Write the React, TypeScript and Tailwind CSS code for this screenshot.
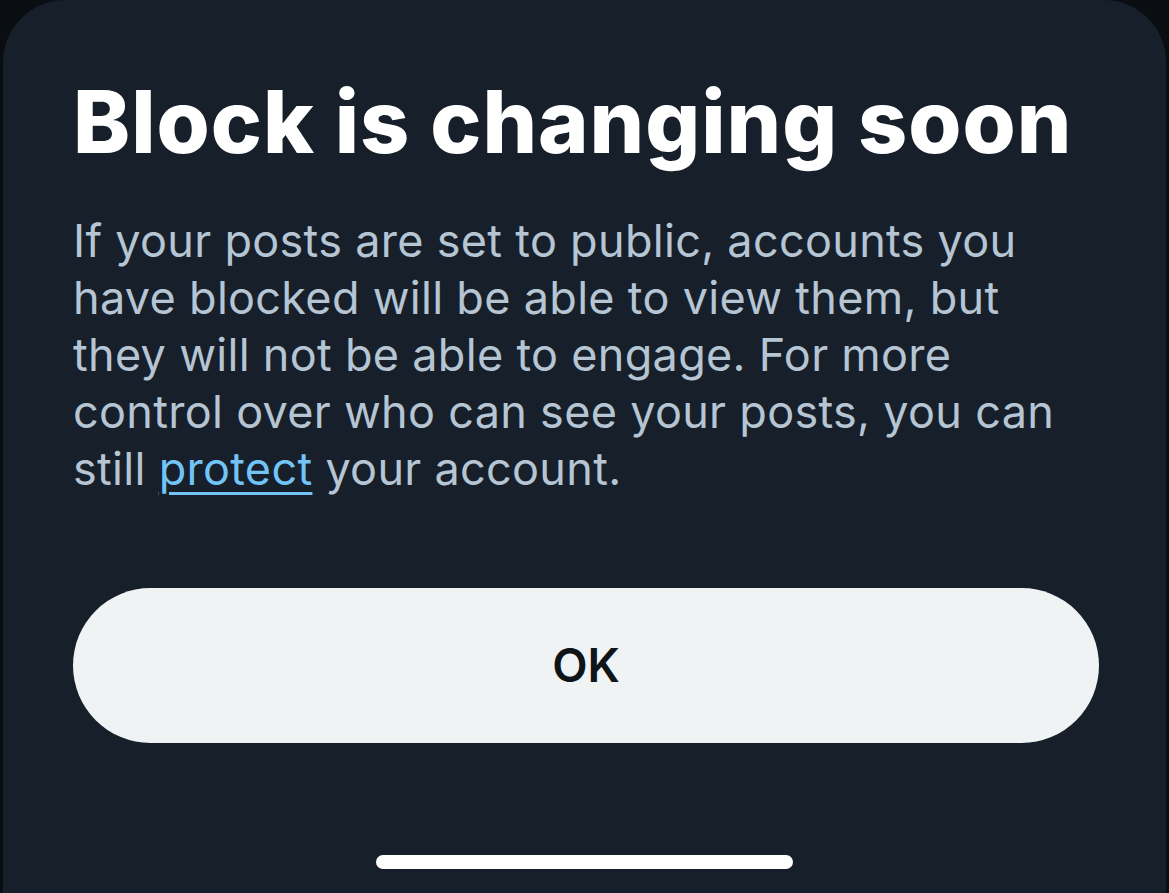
export default function App() {
  return (
    <div className="h-[893px] w-[1169px] overflow-hidden bg-[#0a0d11] font-['Inter',sans-serif]">
      <div className="mx-[3px] flex h-full flex-col rounded-t-[62px] bg-[#17202a] px-[70px]">
        <h1 className="mt-[76px] whitespace-nowrap text-[86px] font-extrabold leading-[92px] tracking-[1px] text-white">
          Block is changing soon
        </h1>
        <p className="mt-[44px] whitespace-nowrap text-[45px] leading-[57px] tracking-[0.3px] text-[#b6c5d3]">
          If your posts are set to public, accounts you
          <br />
          have blocked will be able to view them, but
          <br />
          they will not be able to engage. For more
          <br />
          control over who can see your posts, you can
          <br />
          still{" "}
          <a href="#" className="text-[#72c4f6] underline decoration-[3px] underline-offset-[7px]">
            protect
          </a>{" "}
          your account.
        </p>
        <button className="mt-[91px] h-[155px] w-[1026px] rounded-full bg-[#eff3f4] text-[46px] font-semibold text-[#0f1419]">
          OK
        </button>
        <div className="mt-[112px] flex justify-center">
          <div className="h-[14px] w-[417px] rounded-full bg-white" />
        </div>
      </div>
    </div>
  );
}
